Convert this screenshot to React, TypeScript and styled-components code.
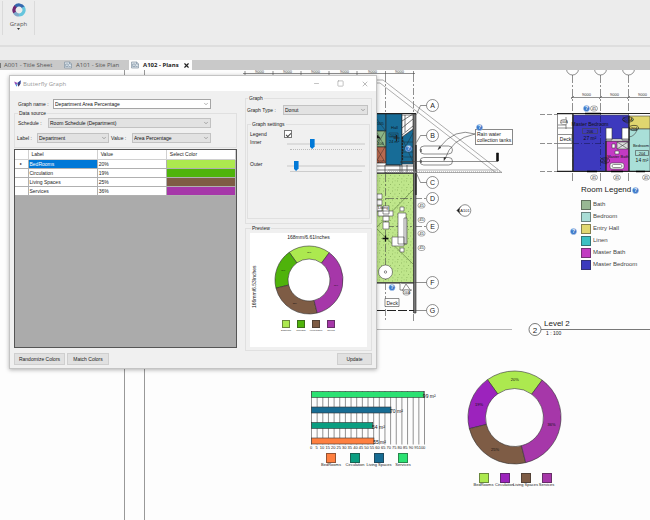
import React from "react";
import styled, { createGlobalStyle } from "styled-components";
import { ChevronDown, X, Minus, Square } from "lucide-react";

const SANS = '"Liberation Sans", Arial, sans-serif';
const UI = '"Open Sans", "Noto Sans", sans-serif';

const GlobalStyle = createGlobalStyle`
  *, *::before, *::after { box-sizing: border-box; }
  body { margin: 0; background: #fdfdfd; color: #222; font: 5px/6px ${SANS}; }
  button, input, select { font: inherit; color: inherit; margin: 0; }
  svg text { stroke: none; }
`;

/* ---------- application frame ---------- */

const Page = styled.div`
  display: flex;
  flex-direction: column;
  min-height: 100vh;
  overflow: hidden;
`;

const Ribbon = styled.header`
  display: flex;
  height: 47px;
  padding: 1px 2px 10px;
  background: #ececec;
  border-bottom: 2px solid #dedede;
`;

const RibbonButton = styled.button`
  display: flex;
  flex-direction: column;
  align-items: center;
  width: 33px;
  padding: 2px 0 0;
  border: solid #dadada;
  border-width: 0 1px;
  background: none;
  color: #555;
  font: 6px/8px ${UI};
  & > span { margin-top: 3px; }
`;

const TabStrip = styled.nav`
  display: flex;
  align-items: stretch;
  height: 23px;
  padding: 13px 0 0;
  background: linear-gradient(#ececec 13px, #c9c9c9 13px);
  font: 6px/10px ${UI};
`;

const Tab = styled.button<{ $active?: boolean; $width: number }>`
  display: flex;
  align-items: center;
  gap: 4px;
  width: ${(p) => p.$width}px;
  padding: 0 2px;
  border: 0;
  white-space: nowrap;
  background: ${(p) => (p.$active ? "#fdfdfd" : "transparent")};
  color: ${(p) => (p.$active ? "#222" : "#555")};
  font-weight: ${(p) => (p.$active ? 700 : 400)};
  & > svg { flex: none; }
`;

const TabDivider = styled.span`
  width: 1px;
  height: 5px;
  margin: 3px 1px 0 0;
  background: #777;
`;

const CloseTab = styled.button`
  display: flex;
  align-items: center;
  padding: 0 2px 0 0;
  border: 0;
  background: #fdfdfd;
  color: #222;
`;

const Workspace = styled.main`
  position: relative;
  flex: 1;
  min-height: 450px;
  background: #fdfdfd;
`;

/* An item placed on the drawing sheet. */
const SheetItem = styled.div<{ $x: number; $y: number }>`
  position: absolute;
  left: ${(p) => p.$x}px;
  top: ${(p) => p.$y}px;
  & > svg { display: block; }
`;

const SheetEdge = styled.div`
  position: absolute;
  left: 124px;
  top: 0;
  bottom: 0;
  width: 21px;
  border: solid #999;
  border-width: 0 1px;
`;

/* ---------- dialog ---------- */

const Dialog = styled.section`
  position: absolute;
  left: 9px;
  top: 5px;
  width: 368px;
  border: 1px solid #c4c4c4;
  background: #f0f0f0;
  box-shadow: 0 1px 4px rgba(0, 0, 0, 0.3);
`;

const TitleBar = styled.div`
  display: flex;
  align-items: center;
  gap: 2px;
  height: 15px;
  padding: 0 7px 0 4px;
  background: #fff;
  color: #999;
  font: 6px/8px ${UI};
`;

const WindowButtons = styled.div`
  display: flex;
  gap: 17px;
  margin-left: auto;
`;

const WindowButton = styled.button`
  display: flex;
  padding: 0;
  border: 0;
  background: none;
  color: #999;
`;

const DialogBody = styled.div`
  display: grid;
  grid-template-columns: 223px 1fr;
  gap: 8px;
  padding: 4px 4px 0;
`;

const Column = styled.div<{ $top?: number }>`
  display: flex;
  flex-direction: column;
  gap: 1px;
  padding-top: ${(p) => p.$top || 0}px;
`;

const Group = styled.fieldset<{ $pad: string; $height?: number }>`
  min-width: 0;
  margin: 0;
  padding: ${(p) => p.$pad};
  border: 1px solid #e0e0e0;
  height: ${(p) => (p.$height ? p.$height + "px" : "auto")};
  & > legend { padding: 0 1px; margin-left: 1px; line-height: 6px; }
`;

const FieldRow = styled.div<{ $below?: number; $inset?: number; $top?: boolean }>`
  display: flex;
  align-items: ${(p) => (p.$top ? "flex-start" : "center")};
  padding-left: ${(p) => p.$inset || 0}px;
  margin-bottom: ${(p) => p.$below || 0}px;
`;

const FieldLabel = styled.label<{ $width: number }>`
  flex: none;
  width: ${(p) => p.$width}px;
  white-space: nowrap;
`;

const ComboFrame = styled.span<{ $width: number; $white?: boolean }>`
  position: relative;
  flex: none;
  display: flex;
  width: ${(p) => p.$width}px;
  height: 10px;
  border: 1px solid ${(p) => (p.$white ? "#a5a5a5" : "#c2c2c2")};
  background: ${(p) => (p.$white ? "#fff" : "#e2e2e2")};
  color: #111;
  & > svg { position: absolute; right: 1px; top: 1px; pointer-events: none; color: #666; }
  & > select, & > input {
    appearance: none;
    width: 100%;
    height: 8px;
    padding: 0 1px;
    border: 0;
    border-radius: 0;
    outline: 0;
    background: none;
  }
`;

const GridFrame = styled.div`
  height: 199px;
  border: 1px solid #555;
  background: #ababab;
`;

const Grid = styled.table`
  width: 100%;
  table-layout: fixed;
  border-collapse: collapse;
  background: #fff;
  th, td {
    height: 9px;
    padding: 0 1px;
    border: solid #b0b0b0;
    border-width: 0 1px 1px 0;
    text-align: left;
    font-weight: 400;
    line-height: 6px;
  }
  thead th { padding-left: 3px; border-color: #d0d0d0; }
  th:first-child { width: 13px; text-align: center; font-size: 4px; }
`;

const LabelCell = styled.td<{ $selected: boolean }>`
  background: ${(p) => (p.$selected ? "#0078d7" : "#fff")};
  color: ${(p) => (p.$selected ? "#fff" : "#222")};
`;

const ColorCell = styled.td<{ $color: string }>`
  background: ${(p) => p.$color};
`;

const CheckBox = styled.input`
  appearance: none;
  display: grid;
  place-items: center;
  width: 8px;
  height: 8px;
  border: 1px solid #777;
  background: #fff;
  &:checked::after {
    content: "";
    width: 5px;
    height: 3px;
    border: solid #444;
    border-width: 0 0 1px 1px;
    transform: rotate(-45deg);
  }
`;

const SliderBox = styled.div<{ $dotted?: boolean }>`
  width: 78px;
  height: 12px;
  padding-bottom: 1px;
  & > input {
    appearance: none;
    display: block;
    width: 100%;
    height: 10px;
    background: linear-gradient(#dcdcdc, #dcdcdc) 0 4px / 100% 2px no-repeat;
  }
  & > input::-webkit-slider-thumb {
    appearance: none;
    width: 5px;
    height: 10px;
    background: #0078d7;
    clip-path: polygon(0 0, 100% 0, 100% 75%, 50% 100%, 0 75%);
  }
  &::after {
    content: "";
    display: block;
    margin: 0 3px;
    border-top: 1px ${(p) => (p.$dotted ? "dotted #bbb" : "solid #ccc")};
  }
`;

const PreviewPane = styled.div`
  display: grid;
  grid-template-columns: 8px 1fr;
  grid-template-rows: 9px auto;
  height: 114px;
  background: #fff;
`;

const WidthNote = styled.div`
  grid-column: 1 / 3;
  padding-top: 1px;
  text-align: center;
  line-height: 6px;
`;

const HeightNote = styled.div`
  writing-mode: vertical-rl;
  transform: rotate(180deg);
  height: 89px;
  text-align: center;
  line-height: 8px;
`;

const PreviewChart = styled.div`
  display: flex;
  flex-direction: column;
  align-items: center;
  gap: 5px;
  padding: 3px 8px 0 0;
`;

const DialogFooter = styled.div`
  display: flex;
  gap: 2px;
  padding: 2px 4px 3px;
`;

const PushButton = styled.button<{ $width: number; $end?: boolean }>`
  width: ${(p) => p.$width}px;
  height: 12px;
  margin-left: ${(p) => (p.$end ? "auto" : "0")};
  padding: 0;
  border: 1px solid #cfcfcf;
  background: #e1e1e1;
  white-space: nowrap;
`;

/* ---------- legends on the sheet ---------- */

const SwatchRow = styled.ul<{ $pitch: number; $font: number }>`
  display: flex;
  margin: 0;
  padding: 0;
  list-style: none;
  font-size: ${(p) => p.$font}px;
  line-height: 4px;
  & > li {
    display: flex;
    flex-direction: column;
    align-items: center;
    width: ${(p) => p.$pitch}px;
    white-space: nowrap;
  }
`;

const Swatch = styled.span<{ $color: string; $size: number }>`
  flex: none;
  width: ${(p) => p.$size}px;
  height: ${(p) => p.$size}px;
  border: 1px solid rgba(40, 40, 40, 0.5);
  background: ${(p) => p.$color};
`;

const LegendTitle = styled.h2`
  display: flex;
  align-items: center;
  gap: 1px;
  margin: 0 0 5px;
  white-space: nowrap;
  font: 8px/10px ${SANS};
`;

const RoomList = styled.ul`
  display: flex;
  flex-direction: column;
  gap: 2px;
  margin: 0;
  padding: 0;
  list-style: none;
  font-size: 6px;
  color: #444;
  & > li { display: flex; gap: 2px; line-height: 8px; white-space: nowrap; }
`;

const Callout = styled.div`
  padding: 1px;
  border: 1px solid #888;
  background: #fff;
  font: 5px/6px ${SANS};
  white-space: nowrap;
`;

const ViewTitle = styled.div`
  font: 8px/10px ${SANS};
  white-space: nowrap;
  & > small { display: block; padding: 1px 2px; font-size: 5px; line-height: 6px; }
`;

/* ---------- charts ---------- */

type Slice = { name: string; pct: number; color: string };

const departments: Slice[] = [
  { name: "BedRooms", pct: 20, color: "#ace94f" },
  { name: "Circulation", pct: 19, color: "#4fb30b" },
  { name: "Living Spaces", pct: 25, color: "#7e5c45" },
  { name: "Services", pct: 36, color: "#a637a9" },
];

const sheetDepartments = departments.map((d) =>
  d.name === "Circulation" ? { ...d, color: "#9c23bd" } : d
);

function Donut({ data, size, hole, font }: { data: Slice[]; size: number; hole: number; font: number }) {
  const c = size / 2;
  const outer = c - 1;
  const at = (deg: number, r: number) => {
    const a = (deg * Math.PI) / 180;
    return [c + r * Math.sin(a), c - r * Math.cos(a)];
  };
  let end = 36.5;
  return (
    <svg width={size} height={size} viewBox={`0 0 ${size} ${size}`}>
      {data.map((d) => {
        const start = end - d.pct * 3.6;
        const [x1, y1] = at(start, outer);
        const [x2, y2] = at(end, outer);
        const [x3, y3] = at(end, hole);
        const [x4, y4] = at(start, hole);
        const [tx, ty] = at((start + end) / 2, (outer + hole) / 2);
        const big = d.pct > 50 ? 1 : 0;
        end = start;
        return (
          <g key={d.name}>
            <path
              d={`M${x1} ${y1}A${outer} ${outer} 0 ${big} 1 ${x2} ${y2}L${x3} ${y3}A${hole} ${hole} 0 ${big} 0 ${x4} ${y4}Z`}
              fill={d.color}
              stroke="#333"
              strokeWidth=".6"
            />
            <text x={tx} y={ty + font / 3} fontSize={font} textAnchor="middle" fill="#111">
              {d.pct}%
            </text>
          </g>
        );
      })}
    </svg>
  );
}

function SwatchLegend({ data, pitch, size, font }: { data: { name: string; color: string }[]; pitch: number; size: number; font: number }) {
  return (
    <SwatchRow $pitch={pitch} $font={font}>
      {data.map((d) => (
        <li key={d.name}>
          <Swatch $color={d.color} $size={size} />
          {d.name}
        </li>
      ))}
    </SwatchRow>
  );
}

const areas = [
  { name: "Services", value: 99, label: "99 m²", color: "#2be272" },
  { name: "Living Spaces", value: 70, label: "70 m²", color: "#176c93" },
  { name: "Circulation", value: 54, label: "54 m²", color: "#0b9e81" },
  { name: "BedRooms", value: 55, label: "55 m²", color: "#ff8040" },
];

function BarChart() {
  const marks = Array.from({ length: 21 }, (_, i) => i * 5);
  return (
    <svg width="136" height="60" viewBox="308 390 136 60">
      {marks.map((m) => (
        <g key={m}>
          <path d={`M${311.5 + m * 1.13} 391v53.500`} stroke="#777" strokeWidth=".8" />
          <text x={311 + m * 1.11} y="448.500" fontSize="4" textAnchor="middle" fill="#222">{m}</text>
        </g>
      ))}
      {areas.map((a, i) => (
        <g key={a.name}>
          <rect x="311.500" y={391.5 + i * 15.5} width={a.value * 1.135} height="6" fill={a.color} stroke="#333" strokeWidth=".6" />
          <text x={311 + a.value * 1.13} y={397.5 + i * 15.5} fontSize="5" fill="#111">{a.label}</text>
        </g>
      ))}
    </svg>
  );
}

/* ---------- icons ---------- */

function GraphIcon() {
  const arc = (d: string, c: string) => <path d={d} fill="none" stroke={c} strokeWidth="3.2" />;
  return (
    <svg width="14" height="14" viewBox="0 0 14 14">
      {arc("M3.3 3.6A5 5 0 0 1 11.3 4.4", "#3468ae")}
      {arc("M11.1 4.1A5 5 0 0 1 7 12", "#66c5dd")}
      {arc("M7 12A5 5 0 0 1 2.4 9", "#7fa8ca")}
      {arc("M2.6 9.4A5 5 0 0 1 3.6 3.4", "#70256f")}
    </svg>
  );
}

function SheetIcon() {
  return (
    <svg width="8" height="8" viewBox="0 0 8 8">
      <path d="M.5 1h5.2L7.5 2.8V7H.5z" fill="#dce4ea" stroke="#8494a2" strokeWidth=".7" />
      <path d="M5.500 1v2h2M1.700 3h2.500v2.500H1.700zM5 5.500h1.600" fill="none" stroke="#72879a" strokeWidth=".6" />
    </svg>
  );
}

function ButterflyIcon() {
  return (
    <svg width="7" height="7" viewBox="0 0 7 7">
      <path d="M.2 1.500L3 2.800 3.200 4.600 1.200 4.400z" fill="#9650b5" />
      <path d="M3.200 3L6.900.2 6.500 3.900 4 4.400z" fill="#2d3f91" />
      <path d="M1.300 4.300l2.200.1L2.700 6.700z" fill="#3b8fdf" />
      <path d="M3.600 4.300l2.600-.3L4.600 6.700z" fill="#35204f" />
    </svg>
  );
}

function Help({ x, y }: { x: number; y: number }) {
  return (
    <g>
      <circle cx={x} cy={y} r="3.1" fill="#3b78c9" stroke="#b5cdef" strokeWidth=".5" />
      <text x={x} y={y + 1.8} fontSize="5" fontWeight="700" textAnchor="middle" fill="#fff">?</text>
    </g>
  );
}

function HelpBadge() {
  return (
    <svg width="7" height="7" viewBox="0 0 7 7">
      <Help x={3.5} y={3.5} />
    </svg>
  );
}

/* ---------- floor plans ---------- */

const gridBubbles: [string, number][] = [["A", 105], ["B", 135], ["C", 182], ["D", 198], ["E", 226], ["F", 282], ["G", 310]];

function Tag({ x, y, text = "45" }: { x: number; y: number; text?: string }) {
  return (
    <g>
      <rect x={x - 3.5} y={y - 2.5} width="7" height="5" rx="2.5" fill="#fff" stroke="#555" strokeWidth=".5" />
      <text x={x} y={y + 1.4} fontSize={text.length > 2 ? 3 : 4} textAnchor="middle" fill="#222">{text}</text>
    </g>
  );
}

function LevelOnePlan() {
  return (
    <svg width="280" height="262" viewBox="240 70 280 262" fill="none" stroke="#444" strokeWidth=".6">
      <defs>
        <pattern id="grass" width="9" height="9" patternUnits="userSpaceOnUse">
          <rect width="9" height="9" fill="#bfe68b" stroke="none" />
          <path d="M1 1h.8M5 2h.8M3 4.5h.8M7.5 5h.8M1.5 7.5h.8M5.5 7.8h.8M7.8 .8h.6" stroke="#719b46" strokeWidth=".7" />
        </pattern>
      </defs>
      <path d="M243 73.5H415M245 71v4M273 71v4M301 71v4M329 71v4M357 71v4M385.500 71v4M413.500 71v4" />
      <g fill="#444" fontSize="4">
        <text x="255" y="72.500">9000</text><text x="283" y="72.500">9000</text><text x="311" y="72.500">9000</text>
        <text x="340" y="72.500">9000</text><text x="368" y="72.500">9000</text><text x="395" y="72.500">9000</text>
      </g>
      <path d="M385.500 75V114M413.500 75V114" strokeDasharray="7 2 2 2" />

      {/* rooms on the upper side */}
      <g stroke="#222">
        <path d="M370 114h16v17h-16z" fill="#1a6f9a" />
        <path d="M370 131h16v16h-16z" fill="#8db787" />
        <path d="M370 147h16v16h-16z" fill="#b96a50" />
        <path d="M386 114h16v51h-16z" fill="#176c97" />
        <path d="M402 137l11-8v35h-11z" fill="#176c97" />
        <path d="M402 115h11v14l-11 8z" fill="#fff" />
        <path d="M402 121l11-7M402 128l11-9M402 135l11-9M405 115v17" />
        <path d="M402 142h11M402 147h11M402 152h11M402 157h11M402 138l11 24M413 133l-11 20" strokeWidth=".4" />
        <path d="M376 131l9 16M385 131l-9 16M376 147l9 15M385 147l-9 15M376 118l9 12" strokeWidth=".4" />
        <path d="M375 138h5l-3-3zm5 0l-3 4" fill="#111" />
        <path d="M402.500 137v24" strokeWidth="1.200" strokeDasharray="2 1" />
        <path d="M393.500 138h6M396.500 135v6" strokeWidth="1.200" />
        <path d="M389 133h9v4h-9z" strokeWidth=".4" />
        <path d="M385 165h15v8h-15zM400 162h13M402 165v8M407 165v8M376 166h38M376 170h38" fill="none" />
      </g>
      <g fill="#101820" fontSize="4">
        <text x="391" y="129">Hall</text><text x="390" y="136.500">102</text><text x="389" y="143">24 m²</text>
        <text x="377" y="125">105</text><text x="377" y="145">106</text><text x="377" y="163">107</text>
      </g>

      {/* garden side */}
      <path d="M370 173.500h44v109h-44z" fill="url(#grass)" stroke="#333" />
      <path d="M376 228l37-38M376 228l37 36" stroke="#547338" />
      <path d="M385.500 174v108M386 198.500h40M386 226.500h40" strokeDasharray="8 2 2 2" />
      <g fill="#fff">
        <path d="M377 194h5v5h-5zM377 200h5v5h-5zM377 206h5v5h-5zM383 206h6v8h-6zM383 216h6v5h-6zM383 222h6v7h-6zM378 211h15v5h-15z" />
        <path d="M398 213h8v31h-8zM392 237h12v9h-12zM404 218h3v26h-3zM400 207h4v4h-4zM400 248h4v4h-4z" />
        <circle cx="385.500" cy="272" r="7" />
        <circle cx="385.500" cy="272" r="1.200" />
      </g>
      <text x="378" y="209" fontSize="4" fill="#222">Living</text>
      <path d="M382.500 238.500h6M385.500 235.500v6" stroke="#111" strokeWidth="1.300" />

      {/* outer walls */}
      <path d="M370 113.500h46M370 173h46M370 283h44" stroke="#222" strokeWidth="1.200" />
      <path d="M413.500 114v199h2.500V114z" fill="#777" stroke="#222" />
      <path d="M416 145v50" stroke="#111" strokeWidth="1.200" />
      <path d="M376 310.500h38" strokeWidth="1.200" strokeDasharray="9 2" stroke="#222" />
      <path d="M385.500 283V322M413.500 314V322" strokeDasharray="7 2 2 2" />
      <path d="M385 298.500h14v8h-14zM400 283v7h12M402 291l4-7 5 7" fill="#fff" />
      <text x="386.500" y="304.500" fontSize="5" fill="#222">Deck</text>
      <Tag x={406.500} y={292.500} text="100A" />

      {/* roof outline */}
      <path d="M376 80h7l119 92.500H387M376 83h4l115 89M388 170h110" stroke="#777" />
      <path d="M387 172h113" stroke="#999" strokeDasharray="1 1" strokeWidth="1.200" />
      <path d="M402 161.500h96" />
      <path d="M496.500 153h2v8h-2z" fill="#111" stroke="#111" />

      {/* tanks and leaders */}
      <rect x="420" y="146" width="32.500" height="8" rx="4" />
      <rect x="420" y="157.500" width="32.500" height="7.500" rx="3.700" />
      <path d="M421 149v3M421 160v3" strokeWidth="1.200" />
      <path d="M475 134q-20-7-36 14M475 134q-24 5-30 25" />
      <path d="M438 149.500l3-2-1.500-1zM444 160.500l2-3-2 0z" fill="#222" />

      {/* grid bubbles */}
      {gridBubbles.map(([name, y]) => (
        <g key={name}>
          <circle cx="432.500" cy={y + 0.5} r="6" fill="#fff" />
          <text x="432.500" y={y + 3} fontSize="7" textAnchor="middle" fill="#222">{name}</text>
        </g>
      ))}
      <path d="M426.500 105.500h-6l-4 9M426.500 135.500h-6l-4 7M426.500 182.500h-6l-4-9M426.500 282.500h-12M426.500 310.500h-12" />
      <Tag x={421.500} y={205.500} />
      <Tag x={421.500} y={220} />
      <Tag x={421.500} y={233.500} />
      <Tag x={421.500} y={248} />
      <path d="M457 210.500l4-4v8z" fill="#111" stroke="#111" />
      <circle cx="465" cy="210.500" r="5.800" fill="#fff" />
      <text x="465" y="212" fontSize="4" textAnchor="middle" fill="#222">A101</text>
      <g stroke="none">
        <Help x={408.500} y={148.500} />
        <Help x={392} y={287.500} />
      </g>
      <path d="M370 329.500h142" stroke="#888" />
    </svg>
  );
}

function LevelTwoPlan() {
  return (
    <svg width="110" height="114" viewBox="540 70 110 114" fill="none" stroke="#444" strokeWidth=".6">
      {[572.5, 600.5, 628.5].map((x) => (
        <g key={x}>
          <circle cx={x} cy="69" r="6" />
          <path d={`M${x} 75v106`} strokeDasharray="8 2 2 2" />
          <path d={`M${x - 1.5} 99l3-3`} />
          <text x={x + 14} y="96" fontSize="4" textAnchor="middle" fill="#333">9000</text>
        </g>
      ))}
      <path d="M571 97.500h79" />
      <path d="M540 114.500h18M540 143.500h18M540 171.500h18" strokeDasharray="5 2" />
      <path d="M557.500 114h15v57h-15z" fill="#fff" />
      <path d="M558 125h8M558 128h14M566 117v12M558 134.500h14v9h-14M558 148h14" />
      <path d="M573 115h56v26h-23v30h-33z" fill="#3d39be" />
      <path d="M606 141h23v30h-23z" fill="#c43ac4" />
      <path d="M629 116h21v13h-21z" fill="#e0d66f" />
      <path d="M629 129h21v42h-21z" fill="#a9dfd8" />
      <path d="M606 128h6v12h-6zM622 128h7v12h-7zM606 139h23v2h-23z" fill="#fff" stroke="#333" />
      <path d="M617 142h11v7h-11zM617 142l11 7M628 142l-11 7" fill="#ddd" />
      <rect x="610" y="163" width="14" height="6" rx="2" fill="#fff" />
      <rect x="612" y="164.500" width="10" height="3" rx="1.500" />
      <path d="M612 144h3v4h-3zM615 151h4v3h-4z" fill="#fff" />
      <path d="M573 143.500h33M600.500 116v55" strokeDasharray="6 2 1 2" stroke="#191955" />
      <path d="M606 165a7 7 0 0 0-6-7M629 137a9 9 0 0 0 8-8M623 116a8 8 0 0 0 6 8" />
      <path d="M557 113.500h93M557 171.500h93M573 113v59M629 116v55M606 141v30" stroke="#222" strokeWidth="1.200" />
      <path d="M585 113.500h16M587 171.500h10M611 171.500h12M636 171.500h9" stroke="#000" strokeWidth="1.600" />
      <g fill="#111" fontSize="5" textAnchor="middle">
        <text x="590" y="125.500">Master Bedroom</text>
        <text x="590" y="132.500" fontSize="4">206</text>
        <text x="590" y="139.500">27 m²</text>
        <text x="618" y="158" fontSize="4">Master Bath</text>
        <text x="641" y="147" fontSize="4">Bedroom</text>
        <text x="642" y="154.500" fontSize="4">204</text>
        <text x="642" y="161.500">14 m²</text>
        <text x="565.500" y="141">Deck</text>
      </g>
      <path d="M582.500 128.500h15v5h-15zM635.500 150.500h13v5h-13z" />
      <Tag x={564} y={122} text="200A" />
      <Tag x={594} y={108.500} />
      <Tag x={594} y={177.500} />
      <Tag x={617} y={177.500} />
      <Tag x={646} y={177.500} />
      <g stroke="#111">
        <ellipse cx="628" cy="119.500" rx="5.500" ry="2.600" /><ellipse cx="634" cy="128" rx="4.500" ry="2.600" /><ellipse cx="605" cy="160.500" rx="4.500" ry="2.600" />
      </g>
      <g fill="#111" fontSize="4" textAnchor="middle">
        <text x="628" y="121">205A</text><text x="634" y="129.500">204</text><text x="605" y="162">207</text>
      </g>
      <g stroke="none"><Help x={586.500} y={108.500} /></g>
    </svg>
  );
}

function ViewMarker() {
  return (
    <svg width="122" height="14" viewBox="528 323 122 14" fill="none" stroke="#555" strokeWidth=".8">
      <path d="M541 329.500h109" />
      <circle cx="535" cy="329.500" r="6" fill="#fff" />
      <text x="535" y="332.500" fontSize="8" textAnchor="middle" fill="#222">2</text>
    </svg>
  );
}

const rooms = [
  ["Bath", "#98b894"],
  ["Bedroom", "#a9ddd6"],
  ["Entry Hall", "#e1d870"],
  ["Linen", "#3cc0c2"],
  ["Master Bath", "#c23cc2"],
  ["Master Bedroom", "#3c3abd"],
];

/* ---------- dialog parts ---------- */

function Combo({ id, value, width }: { id: string; value: string; width: number }) {
  return (
    <ComboFrame $width={width}>
      <select id={id} defaultValue={value}>
        <option>{value}</option>
      </select>
      <ChevronDown size={6} />
    </ComboFrame>
  );
}

function GraphDialog() {
  return (
    <Dialog role="dialog" aria-labelledby="dialog-title">
      <TitleBar>
        <ButterflyIcon />
        <span id="dialog-title">Butterfly Graph</span>
        <WindowButtons>
          <WindowButton aria-label="Minimize"><Minus size={7} strokeWidth={2} /></WindowButton>
          <WindowButton aria-label="Maximize"><Square size={7} strokeWidth={2} /></WindowButton>
          <WindowButton aria-label="Close"><X size={8} strokeWidth={2} /></WindowButton>
        </WindowButtons>
      </TitleBar>
      <DialogBody>
        <Column $top={4}>
          <FieldRow $inset={4}>
            <FieldLabel htmlFor="graph-name" $width={35}>Graph name :</FieldLabel>
            <ComboFrame $width={158} $white>
              <input id="graph-name" defaultValue="Department Area Percentage" />
              <ChevronDown size={6} />
            </ComboFrame>
          </FieldRow>
          <Group $pad="2px 2px 4px">
            <legend>Data source</legend>
            <FieldRow $below={5} $inset={1}>
              <FieldLabel htmlFor="schedule" $width={30}>Schedule :</FieldLabel>
              <Combo id="schedule" value="Room Schedule (Department)" width={163} />
            </FieldRow>
            <FieldRow>
              <FieldLabel htmlFor="label" $width={20}>Label :</FieldLabel>
              <Combo id="label" value="Department" width={72} />
              <FieldRow $inset={2}>
                <FieldLabel htmlFor="value" $width={21}>Value :</FieldLabel>
                <Combo id="value" value="Area Percentage" width={79} />
              </FieldRow>
            </FieldRow>
          </Group>
          <GridFrame>
            <Grid>
              <thead>
                <tr><th /><th>Label</th><th>Value</th><th>Select Color</th></tr>
              </thead>
              <tbody>
                {departments.map((d, i) => (
                  <tr key={d.name}>
                    <th scope="row">{i === 0 ? "▸" : ""}</th>
                    <LabelCell $selected={i === 0}>{d.name}</LabelCell>
                    <td>{d.pct}%</td>
                    <ColorCell $color={d.color} />
                  </tr>
                ))}
              </tbody>
            </Grid>
          </GridFrame>
        </Column>
        <Column>
          <Group $pad="4px 1px 1px" $height={129}>
            <legend>Graph</legend>
            <FieldRow $below={6}>
              <FieldLabel htmlFor="graph-type" $width={36}>Graph Type :</FieldLabel>
              <Combo id="graph-type" value="Donut" width={85} />
            </FieldRow>
            <Group $pad="3px 2px" $height={98}>
              <legend>Graph settings</legend>
              <FieldRow $below={1}>
                <FieldLabel htmlFor="legend" $width={34}>Legend</FieldLabel>
                <CheckBox id="legend" type="checkbox" defaultChecked />
              </FieldRow>
              <FieldRow $below={10} $top>
                <FieldLabel htmlFor="inner" $width={37}>Inner</FieldLabel>
                <SliderBox $dotted><input id="inner" type="range" defaultValue={31} /></SliderBox>
              </FieldRow>
              <FieldRow $top>
                <FieldLabel htmlFor="outer" $width={37}>Outer</FieldLabel>
                <SliderBox><input id="outer" type="range" defaultValue={9} /></SliderBox>
              </FieldRow>
            </Group>
          </Group>
          <Group $pad="2px 4px 3px">
            <legend>Preview</legend>
            <PreviewPane>
              <WidthNote>168mm/6.61Inches</WidthNote>
              <HeightNote>166mm/6.53Inches</HeightNote>
              <PreviewChart>
                <Donut data={departments} size={70} hole={21} font={2} />
                <SwatchLegend data={departments} pitch={15} size={8} font={2} />
              </PreviewChart>
            </PreviewPane>
          </Group>
        </Column>
      </DialogBody>
      <DialogFooter>
        <PushButton $width={51}>Randomize Colors</PushButton>
        <PushButton $width={42}>Match Colors</PushButton>
        <PushButton $width={35} $end>Update</PushButton>
      </DialogFooter>
    </Dialog>
  );
}

export default function App() {
  return (
    <Page>
      <GlobalStyle />
      <Ribbon>
        <RibbonButton>
          <GraphIcon />
          <span>Graph</span>
          <svg width="3" height="2" viewBox="0 0 3 2"><path d="M0 0h3L1.500 2z" fill="#333" /></svg>
        </RibbonButton>
      </Ribbon>
      <TabStrip>
        <TabDivider />
        <Tab $width={60}>A001 - Title Sheet</Tab>
        <Tab $width={67}><SheetIcon />A101 - Site Plan</Tab>
        <Tab $width={54} $active><SheetIcon />A102 - Plans</Tab>
        <CloseTab aria-label="Close tab"><X size={7} strokeWidth={4} /></CloseTab>
      </TabStrip>
      <Workspace>
        <SheetEdge />
        <SheetItem $x={240} $y={0}><LevelOnePlan /></SheetItem>
        <SheetItem $x={475} $y={59}><Callout>Rain water<br />collection tanks</Callout></SheetItem>
        <SheetItem $x={476} $y={54}><HelpBadge /></SheetItem>
        <SheetItem $x={540} $y={0}><LevelTwoPlan /></SheetItem>
        <SheetItem $x={581} $y={115}>
          <LegendTitle>Room Legend<HelpBadge /></LegendTitle>
          <RoomList>
            {rooms.map(([name, color]) => (
              <li key={name}><Swatch $color={color} $size={10} />{name}</li>
            ))}
          </RoomList>
        </SheetItem>
        <SheetItem $x={570} $y={158}><HelpBadge /></SheetItem>
        <SheetItem $x={528} $y={253}><ViewMarker /></SheetItem>
        <SheetItem $x={544} $y={249}><ViewTitle>Level 2<small>1 : 100</small></ViewTitle></SheetItem>
        <SheetItem $x={308} $y={320}><BarChart /></SheetItem>
        <SheetItem $x={319} $y={383}>
          <SwatchLegend data={[...areas].reverse()} pitch={24} size={10} font={4} />
        </SheetItem>
        <SheetItem $x={467} $y={300}><Donut data={sheetDepartments} size={95} hole={29} font={4} /></SheetItem>
        <SheetItem $x={473} $y={403}>
          <SwatchLegend data={sheetDepartments} pitch={21} size={10} font={4} />
        </SheetItem>
        <GraphDialog />
      </Workspace>
    </Page>
  );
}
